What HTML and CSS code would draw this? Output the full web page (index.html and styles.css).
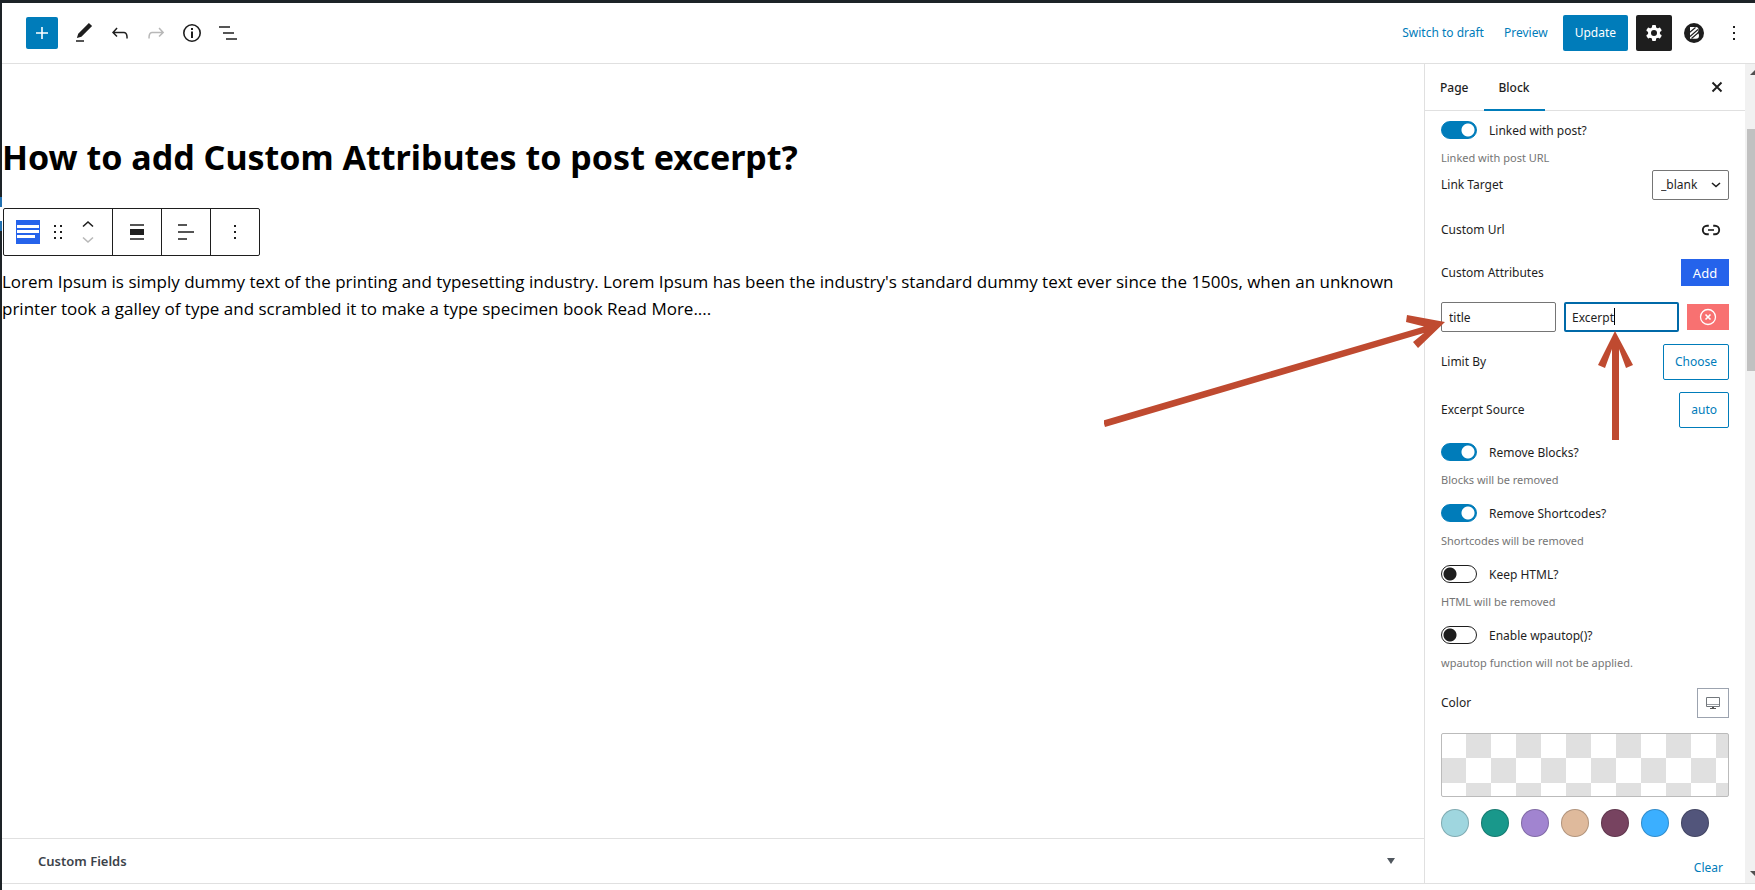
FILE: index.html
```html
<!DOCTYPE html>
<html lang="en">
<head>
<meta charset="utf-8">
<title>Edit Page</title>
<link rel="stylesheet" href="styles.css">
</head>
<body>
<div class="editor">
  <header class="topbar">
    <div class="tools">
      <button class="inserter" aria-label="Add block"><svg width="24" height="24" viewBox="0 0 24 24"><path d="M18 11.2h-5.2V6h-1.6v5.2H6v1.6h5.2V18h1.6v-5.2H18z" fill="currentColor"/></svg></button>
      <button class="tool" aria-label="Tools"><svg width="24" height="24" viewBox="0 0 24 24"><path d="M20.1 5.1L16.9 2 6.2 12.7l-1.3 4.4 4.5-1.3L20.1 5.1zM4 19.2h8v1.6H4z" fill="currentColor"/></svg></button>
      <button class="tool" aria-label="Undo"><svg width="24" height="24" viewBox="0 0 24 24"><path d="M18.3 11.7c-.6-.6-1.4-.9-2.3-.9H6.7l2.9-3.3-1.1-1-4.5 5L8.500 16l1-1-2.700-2.700H16c.5 0 .9.2 1.300.5 1 1 1 3.400 1 4.500v.3h1.500v-.2c0-1.500 0-4.300-1.500-5.700z" fill="currentColor"/></svg></button>
      <button class="tool" aria-label="Redo" disabled><svg width="24" height="24" viewBox="0 0 24 24"><path d="M15.600 6.500l-1.100 1 2.900 3.300H8c-.9 0-1.700.3-2.300.9-1.400 1.500-1.400 4.200-1.400 5.600v.2h1.500v-.3c0-1.100 0-3.500 1-4.500.3-.3.7-.5 1.300-.5h9.200L14.500 15l1.100 1.100 4.600-4.600-4.600-5z" fill="currentColor"/></svg></button>
      <button class="tool" aria-label="Details"><svg width="24" height="24" viewBox="0 0 24 24"><circle cx="12" cy="12" r="8.200" fill="none" stroke="currentColor" stroke-width="1.600"/><path d="M11 7h2v2h-2zM11 10.500h2V17h-2z" fill="currentColor"/></svg></button>
      <button class="tool" aria-label="List view"><svg width="24" height="24" viewBox="0 0 24 24"><path d="M3 5.200h11v1.600H3zM7 11.200h11v1.600H7zM10 17.200h11v1.600H10z" fill="currentColor"/></svg></button>
    </div>
    <div class="actions">
      <button class="text-button">Switch to draft</button>
      <button class="text-button">Preview</button>
      <button class="update">Update</button>
      <button class="settings" aria-label="Settings"><svg width="24" height="24" viewBox="0 0 24 24"><g fill="currentColor"><circle cx="12" cy="12" r="6"/><rect x="10" y="4" width="4" height="16" rx="1"/><rect x="10" y="4" width="4" height="16" rx="1" transform="rotate(60 12 12)"/><rect x="10" y="4" width="4" height="16" rx="1" transform="rotate(120 12 12)"/></g><circle cx="12" cy="12" r="3" fill="#1e1e1e"/></svg></button>
      <button class="plugin" aria-label="Plugin settings"><svg width="20" height="20" viewBox="0 0 20 20"><circle cx="10" cy="10" r="10" fill="#1e1e1e"/><path d="M6 4h6q2.500 0 2.500 2.800 0 1.500-1 2.700 1.500 1 1.500 3 0 3.300-3 3.300H6z" fill="#fff"/><path d="M5.500 9.500L11.500 4.500M6 13.500L14 6.500M7.500 15.500L14.500 9.500" stroke="#1e1e1e" stroke-width="1.100"/></svg></button>
      <button class="tool" aria-label="Options"><svg width="24" height="24" viewBox="0 0 24 24"><path d="M11 5h2v2h-2zM11 11h2v2h-2zM11 17h2v2h-2z" fill="currentColor"/></svg></button>
    </div>
  </header>

  <div class="workspace">
    <main class="content">
      <div class="canvas">
        <h1 class="title">How to add Custom Attributes to post excerpt?</h1>
        <div class="block-toolbar" role="toolbar" aria-label="Block tools">
          <div class="group first">
            <button aria-label="Post excerpt"><svg width="24" height="24" viewBox="0 0 24 24"><path d="M0 0h24v24H0z" fill="#2563eb"/><path d="M1 5h22v3H1zM1 10h22v3H1zM1 15h18v3H1z" fill="#fff"/></svg></button>
            <button aria-label="Drag"><svg width="24" height="24" viewBox="0 0 24 24"><path d="M8 5h2v2H8zM14 5h2v2h-2zM8 11h2v2H8zM14 11h2v2h-2zM8 17h2v2H8zM14 17h2v2h-2z" fill="currentColor"/></svg></button>
            <div class="movers">
              <button aria-label="Move up"><svg width="14" height="8" viewBox="0 0 14 8"><path d="M2 6.500l5-4.500 5 4.500" fill="none" stroke="currentColor" stroke-width="1.600"/></svg></button>
              <button aria-label="Move down" disabled><svg width="14" height="8" viewBox="0 0 14 8"><path d="M2 1.500L7 6l5-4.500" fill="none" stroke="currentColor" stroke-width="1.600"/></svg></button>
            </div>
          </div>
          <div class="group"><button aria-label="Align"><svg width="24" height="24" viewBox="0 0 24 24"><path d="M5 4.200h14v1.600H5zM5 9h14v6H5zM5 18.200h14v1.600H5z" fill="currentColor"/></svg></button></div>
          <div class="group"><button aria-label="Text align"><svg width="24" height="24" viewBox="0 0 24 24"><path d="M4 4.200h9v1.600H4zM4 11.200h16v1.600H4zM4 18.200h9v1.600H4z" fill="currentColor"/></svg></button></div>
          <div class="group"><button aria-label="Block options"><svg width="24" height="24" viewBox="0 0 24 24"><path d="M11 5h2v2h-2zM11 11h2v2h-2zM11 17h2v2h-2z" fill="currentColor"/></svg></button></div>
        </div>
        <p class="excerpt">Lorem Ipsum is simply dummy text of the printing and typesetting industry. Lorem Ipsum has been the industry's standard dummy text ever since the 1500s, when an unknown printer took a galley of type and scrambled it to make a type specimen book Read More....</p>
      </div>
      <button class="metabox"><span>Custom Fields</span><svg width="10" height="8" viewBox="0 0 10 8"><path d="M1 1h8L5 7z" fill="#50575e"/></svg></button>
    </main>

    <aside class="sidebar">
      <div class="tabs">
        <button class="tab">Page</button>
        <button class="tab active">Block</button>
        <button class="close" aria-label="Close settings"><svg width="12" height="12" viewBox="0 0 12 12"><path d="M1.500 1.500l9 9M10.500 1.500l-9 9" stroke="currentColor" stroke-width="1.900"/></svg></button>
      </div>
      <div class="panel">
        <div class="toggle-control">
          <label class="toggle"><input type="checkbox" checked>Linked with post?</label>
          <p class="help">Linked with post URL</p>
        </div>
        <div class="row tight"><label for="target">Link Target</label><select id="target" class="select"><option>_blank</option></select></div>
        <div class="row"><span>Custom Url</span><button class="link" aria-label="Set link"><svg width="24" height="24" viewBox="0 0 24 24"><path d="M9.800 16.200H8a4.200 4.200 0 0 1 0-8.400h1.800M14.200 7.800H16a4.200 4.200 0 0 1 0 8.400h-1.800" fill="none" stroke="currentColor" stroke-width="1.900"/><path d="M9 11.200h6v1.600H9z" fill="currentColor"/></svg></button></div>
        <div class="row"><span>Custom Attributes</span><button class="add">Add</button></div>
        <div class="attribute">
          <input class="field" type="text" value="title" aria-label="Attribute name">
          <div class="value"><input class="field current" type="text" value="Excerpt" aria-label="Attribute value"><span class="caret"></span></div>
          <button class="remove" aria-label="Remove attribute"><svg width="18" height="18" viewBox="0 0 18 18"><circle cx="9" cy="9" r="7.500" fill="none" stroke="#fff" stroke-width="1.300"/><path d="M6.500 6.500l5 5M11.500 6.500l-5 5" stroke="#fff" stroke-width="1.600"/></svg></button>
        </div>
        <div class="row near"><span>Limit By</span><button class="outline">Choose</button></div>
        <div class="row near"><span>Excerpt Source</span><button class="outline">auto</button></div>
        <div class="toggle-control">
          <label class="toggle"><input type="checkbox" checked>Remove Blocks?</label>
          <p class="help">Blocks will be removed</p>
        </div>
        <div class="toggle-control">
          <label class="toggle"><input type="checkbox" checked>Remove Shortcodes?</label>
          <p class="help">Shortcodes will be removed</p>
        </div>
        <div class="toggle-control">
          <label class="toggle"><input type="checkbox">Keep HTML?</label>
          <p class="help">HTML will be removed</p>
        </div>
        <div class="toggle-control">
          <label class="toggle"><input type="checkbox">Enable wpautop()?</label>
          <p class="help">wpautop function will not be applied.</p>
        </div>
        <div class="row"><span>Color</span><button class="device" aria-label="Desktop"><svg width="14" height="14" viewBox="0 0 14 14"><path d="M.5 1.500h13v9H.5z" fill="none" stroke="#72777c"/><path d="M1 8.500h12" stroke="#9a9ea3"/><path d="M6 11h2v1H6zM4 12h6v1H4z" fill="#555"/></svg></button></div>
        <button class="preview" aria-label="Custom color picker"></button>
        <div class="swatches">
          <button class="swatch aqua" aria-label="Aqua"></button>
          <button class="swatch teal" aria-label="Teal"></button>
          <button class="swatch violet" aria-label="Violet"></button>
          <button class="swatch sand" aria-label="Sand"></button>
          <button class="swatch plum" aria-label="Plum"></button>
          <button class="swatch sky" aria-label="Sky"></button>
          <button class="swatch slate" aria-label="Slate"></button>
        </div>
        <button class="clear">Clear</button>
      </div>
    </aside>
    <div class="scrollbar" aria-hidden="true">
      <svg width="10" height="7" viewBox="0 0 10 7"><path d="M5 6h10L10 1z" fill="#505050"/></svg>
      <div class="thumb"></div>
      <svg width="10" height="7" viewBox="0 0 10 7"><path d="M5 1h10L10 6z" fill="#505050"/></svg>
    </div>
  </div>
</div>
<svg class="annotation" width="551" height="140" viewBox="1104 310 551 140" aria-hidden="true"><g fill="#bf4a30"><path d="M1103 420.500L1424 326.500 1406 322 1407 315 1445 322 1418 348 1413 342 1424 333 1105 427z"/><path d="M1612 440V349L1605 368 1598 365 1615 331 1633 365 1626 368 1619 349V440z"/></g></svg>
</body>
</html>
```
FILE: styles.css
```css
* { box-sizing: border-box; }
body {
  margin: 0;
  position: relative;
  overflow: hidden;
  background: #fff;
  color: #1e1e1e;
  font: 12px/18px "Noto Sans", "Open Sans", sans-serif;
}
button {
  display: flex;
  align-items: center;
  justify-content: center;
  padding: 0;
  border: 0;
  background: none;
  color: inherit;
  font: inherit;
}
h1, p { margin: 0; }
svg { display: block; flex: none; }

.editor {
  display: flex;
  flex-direction: column;
  height: 100vh;
  padding: 3px 0 6px 2px;
  background:
    linear-gradient(#1d2327, #1d2327) 0 0 / 100% 3px no-repeat,
    linear-gradient(#1d2327 197px, #2271b1 197px 207px, #fff 207px 221px, #2271b1 221px 231px, #1d2327 231px) 0 0 / 2px 100% no-repeat,
    #fff;
}
.topbar {
  display: flex;
  align-items: center;
  justify-content: space-between;
  height: 61px;
  padding: 0 9px 0 24px;
  border-bottom: 1px solid #e0e0e0;
}
.tools { display: flex; align-items: center; gap: 12px; }
.inserter {
  width: 32px;
  height: 32px;
  margin-right: 2px;
  border-radius: 2px;
  background: #007cba;
  color: #fff;
}
.tool { width: 24px; height: 24px; }
button:disabled { color: #b8b8b8; }
.actions { display: flex; align-items: center; }
.text-button { margin-right: 20px; color: #007cba; }
.update {
  height: 36px;
  padding: 0 12px;
  margin: 0 8px 0 -5px;
  border-radius: 2px;
  background: #007cba;
  color: #fff;
}
.settings {
  width: 36px;
  height: 36px;
  margin-right: 12px;
  border-radius: 2px;
  background: #1e1e1e;
  color: #fff;
}
.plugin { margin-right: 18px; }

.workspace {
  display: flex;
  flex: 1;
  min-height: 0;
  border-bottom: 1px solid #e0e0e0;
}
.content { display: flex; flex: 1; flex-direction: column; min-width: 0; }
.canvas { flex: 1; padding-top: 68px; }
.title { color: #000; font-size: 34px; line-height: 50px; font-weight: 700; }
.block-toolbar {
  display: flex;
  width: fit-content;
  height: 48px;
  margin: 26px 0 12px 1px;
  border: 1px solid #1e1e1e;
  border-radius: 2px;
}
.group {
  display: flex;
  align-items: center;
  justify-content: center;
  width: 49px;
  border-left: 1px solid #1e1e1e;
}
.group.first { width: 108px; gap: 6px; padding-right: 5px; border-left: 0; }
.movers { display: flex; flex-direction: column; gap: 8px; margin-left: 5px; }
.excerpt { color: #000; font-family: "Open Sans", sans-serif; font-size: 17px; line-height: 27px; }
.metabox {
  justify-content: space-between;
  height: 45px;
  padding: 0 28px 0 36px;
  border-top: 1px solid #e0e0e0;
  font-size: 13px;
  font-weight: 600;
  color: #3c434a;
}

.sidebar { width: 321px; border-left: 1px solid #e0e0e0; }
.tabs {
  display: flex;
  height: 47px;
  border-bottom: 1px solid #e0e0e0;
}
.tab { padding: 2px 15px 0; margin-bottom: -1px; border-bottom: 2px solid transparent; font-weight: 500; }
.tab.active { border-color: #007cba; }
.close { width: 24px; margin: 0 16px 0 auto; }
.panel { display: flex; flex-direction: column; padding: 10px 16px 0; }
.row {
  display: flex;
  align-items: center;
  justify-content: space-between;
  margin-top: 16px;
}
.row.tight { margin-top: 3px; }
.row.near { margin-top: 12px; }
.toggle-control + .toggle-control,
.row + .toggle-control { margin-top: 15px; }
.toggle { display: flex; align-items: center; gap: 12px; height: 20px; }
.toggle input {
  appearance: none;
  width: 36px;
  height: 18px;
  margin: 0 0 2px;
  border: 1px solid #1e1e1e;
  border-radius: 9px;
  background: radial-gradient(circle at 8px 8px, #1e1e1e 6px, #fff 7px);
}
.toggle input:checked {
  border-color: #007cba;
  background: radial-gradient(circle at 26px 8px, #fff 6px, #007cba 7px);
}
.help { margin-top: 8px; color: #757575; font-size: 11px; }
.select {
  appearance: none;
  width: 77px;
  height: 30px;
  padding: 0 8px;
  border: 1px solid #757575;
  border-radius: 2px;
  background: url("data:image/svg+xml,%3Csvg xmlns='http://www.w3.org/2000/svg' width='10' height='6'%3E%3Cpath d='M1 1l4 3.500L9 1' fill='none' stroke='%231e1e1e' stroke-width='1.600'/%3E%3C/svg%3E") right 7px center no-repeat #fff;
  color: inherit;
  font: inherit;
}
.link { width: 36px; height: 27px; }
.add { width: 48px; height: 27px; background: #2563eb; color: #fff; font-size: 13px; }
.attribute {
  display: grid;
  grid-template-columns: 1fr 1fr 42px;
  align-items: center;
  gap: 8px;
  margin-top: 16px;
}
.field {
  width: 100%;
  min-width: 0;
  height: 30px;
  padding: 0 7px;
  border: 1px solid #757575;
  border-radius: 2px;
  color: inherit;
  font: inherit;
}
.value { position: relative; display: flex; min-width: 0; }
.current { padding: 0 6px; border: 2px solid #0069a8; }
.caret {
  position: absolute;
  top: 6px;
  left: 50px;
  width: 1px;
  height: 17px;
  background: #000;
}
.remove { height: 26px; background: #f87171; }
.outline {
  height: 36px;
  padding: 0 11px;
  border: 1px solid #007cba;
  border-radius: 2px;
  color: #007cba;
}
.device { width: 32px; height: 30px; border: 1px solid #9ca3af; }
.preview {
  height: 64px;
  margin-top: 15px;
  border: 1px solid #bbb;
  border-radius: 2px;
  background: repeating-conic-gradient(#e0e0e0 0 25%, #fff 0 50%) 0 0 / 50px 50px border-box;
}
.swatches { display: flex; gap: 12px; margin-top: 12px; }
.swatch { width: 28px; height: 28px; border: 1px solid rgb(0 0 0 / 20%); border-radius: 50%; }
.aqua { background-color: #9fd6df; }
.teal { background-color: #19988b; }
.violet { background-color: #a184d0; }
.sand { background-color: #dfba9c; }
.plum { background-color: #774360; }
.sky { background-color: #3bafff; }
.slate { background-color: #52557b; }
.clear { align-self: flex-end; margin: 22px 6px 0 0; color: #007cba; }

.scrollbar {
  display: flex;
  flex-direction: column;
  width: 10px;
  padding: 5px 0 6px;
  background: #f1f1f1;
}
.thumb { height: 242px; margin: 53px 0 auto 2px; background: #c1c1c1; }
.annotation { position: absolute; top: 310px; right: 100px; }
```
